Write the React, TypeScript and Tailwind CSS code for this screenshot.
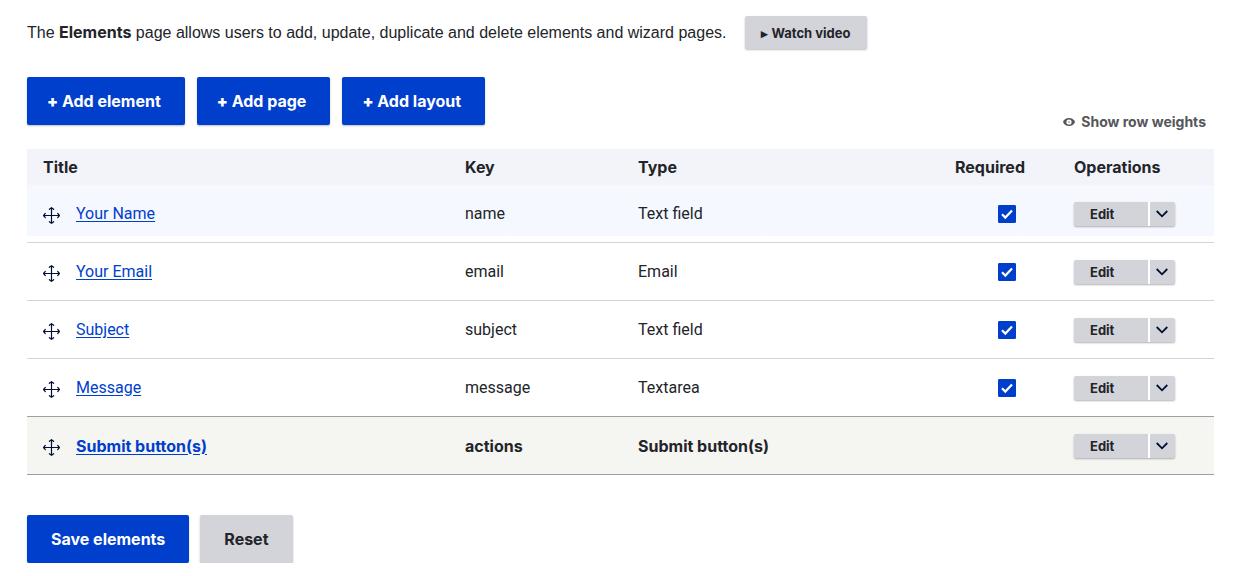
import React from "react";

type Row = { title: string; key: string; type: string; required: boolean; kind: "active" | "plain" | "last" | "actions" };

const rows: Row[] = [
  { title: "Your Name", key: "name", type: "Text field", required: true, kind: "active" },
  { title: "Your Email", key: "email", type: "Email", required: true, kind: "plain" },
  { title: "Subject", key: "subject", type: "Text field", required: true, kind: "plain" },
  { title: "Message", key: "message", type: "Textarea", required: true, kind: "last" },
  { title: "Submit button(s)", key: "actions", type: "Submit button(s)", required: false, kind: "actions" },
];

const rowStyles = {
  active:
    "font-['Roboto',sans-serif] *:border-[#d3d4d9] *:bg-linear-to-b *:from-[#f5f8ff] *:from-[51px] *:to-white *:to-[51px]",
  plain: "font-['Roboto',sans-serif] *:border-[#d3d4d9]",
  last: "font-['Roboto',sans-serif] *:border-[#a0a0a2]",
  actions: "*:border-[#a0a0a2] *:bg-[#f5f5f2] font-bold",
};

function MoveIcon() {
  return (
    <svg className="mt-1 shrink-0" width="17" height="17" viewBox="0 0 17 17" fill="none" stroke="#000f33" strokeWidth="1.2" strokeLinecap="round" strokeLinejoin="round" aria-hidden="true">
      <path d="M8.500 0.700v15.600M0.700 8.500h15.600M6.400 2.300l2.100-1.700 2.100 1.700M6.400 14.700l2.100 1.700 2.100-1.700M2.300 6.400L0.600 8.500l1.700 2.100M14.700 6.400l1.700 2.100-1.700 2.100" />
    </svg>
  );
}

function EyeIcon() {
  return (
    <svg width="12" height="8" viewBox="0 0 12 8" aria-hidden="true">
      <path d="M6 0C3.200 0 1 1.600 0 4c1 2.400 3.200 4 6 4s5-1.600 6-4c-1-2.400-3.200-4-6-4Z" fill="#55565b" />
      <circle cx="6" cy="4" r="2.600" fill="#fff" />
      <circle cx="6" cy="4" r="1.100" fill="#b0b1b5" />
    </svg>
  );
}

function RequiredBox({ label }: { label: string }) {
  return (
    <span className="inline-grid align-middle">
      <input
        type="checkbox"
        defaultChecked
        aria-label={label}
        className="peer col-start-1 row-start-1 size-[18px] appearance-none rounded-[1px] border border-[#8e929c] bg-white checked:border-[#003ecc] checked:bg-[#003ecc]"
      />
      <svg className="pointer-events-none invisible col-start-1 row-start-1 peer-checked:visible" width="18" height="18" viewBox="0 0 18 18" fill="none" stroke="#fff" strokeWidth="2.200" aria-hidden="true">
        <path d="M4 9.300l3.300 3.300L14 5.500" />
      </svg>
    </span>
  );
}

function Operations({ title }: { title: string }) {
  return (
    <div className="mt-px flex h-6 w-[101px] overflow-hidden rounded-xs bg-[#d3d4d9] font-['Inter',sans-serif] text-[13px] font-bold shadow-[0_1px_2px_rgba(0,0,0,0.3)]">
      <button className="flex-1 border-r-2 border-white pl-4 text-left">Edit</button>
      <button aria-label={`More operations for ${title}`} className="flex w-[25px] items-center pl-1.5">
        <svg width="12" height="8" viewBox="0 0 12 8" fill="none" stroke="#000f33" strokeWidth="1.800" aria-hidden="true">
          <path d="M0.700 1l5.300 5.300L11.300 1" />
        </svg>
      </button>
    </div>
  );
}

const primary = "h-12 rounded-xs bg-[#003ecc] font-bold text-white shadow-[0_1px_2px_rgba(0,0,0,0.25)]";
const secondary = "rounded-xs bg-[#d3d4d9] font-bold text-[#232429] shadow-[0_1px_2px_rgba(0,0,0,0.25)]";

export default function App() {
  return (
    <main className="bg-white pt-4 pr-[43px] pl-[27px] font-['Inter',sans-serif] text-base leading-6 text-[#232429]">
      <div className="flex items-baseline gap-[19px]">
        <p className="font-['Liberation_Sans',sans-serif]">
          The <strong className="font-['Inter',sans-serif]">Elements</strong> page allows users to add, update, duplicate and delete elements and wizard pages.
        </p>
        <button className={`${secondary} h-[33px] shrink-0 px-4 text-[13px]`}>
          <span>▸</span> Watch video
        </button>
      </div>
      <div className="mt-7 flex gap-3">
        {["Add element", "Add page", "Add layout"].map((label) => (
          <button key={label} className={`${primary} pr-6 pl-5`}>
            <span className="font-black">+</span> {label}
          </button>
        ))}
      </div>
      <div className="-mt-3.5 flex justify-end pr-2">
        <button className="flex items-center gap-1.5 text-sm leading-[22px] font-bold text-[#55565b]">
          <EyeIcon />
          Show row weights
        </button>
      </div>
      <table className="mt-4 w-full table-fixed border-separate border-spacing-0 text-left">
        <colgroup>
          <col />
          <col className="w-[173px]" />
          <col className="w-[317px]" />
          <col className="w-[119px]" />
          <col className="w-[156px]" />
        </colgroup>
        <thead className="bg-[#f3f4f9]">
          <tr className="h-9">
            {["Title", "Key", "Type", "Required", "Operations"].map((h) => (
              <th key={h} scope="col" className="px-4 py-0 font-bold">
                {h}
              </th>
            ))}
          </tr>
        </thead>
        <tbody>
          {rows.map((r) => (
            <tr key={r.key} className={`h-[58px] *:border-b *:px-4 *:py-0 ${rowStyles[r.kind]}`}>
              <td>
                <div className="flex items-center gap-4">
                  <MoveIcon />
                  <a href="#edit" className="text-[#003ecc] underline underline-offset-2">
                    {r.title}
                  </a>
                </div>
              </td>
              <td>{r.key}</td>
              <td>{r.type}</td>
              <td>
                <div className="flex justify-end pr-[26px]">
                  {r.required && <RequiredBox label={`${r.title} is required`} />}
                </div>
              </td>
              <td>
                <Operations title={r.title} />
              </td>
            </tr>
          ))}
        </tbody>
      </table>
      <div className="mt-10 flex gap-[11px]">
        <button className={`${primary} px-6`}>Save elements</button>
        <button className={`${secondary} h-12 px-6`}>Reset</button>
      </div>
    </main>
  );
}
